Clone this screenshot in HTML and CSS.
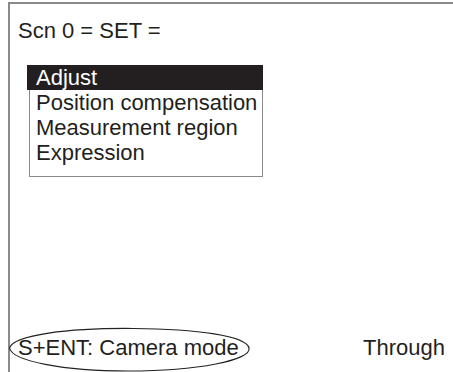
FILE: index.html
```html
<!DOCTYPE html>
<html lang="en">
<head>
  <meta charset="UTF-8">
  <title>Scn 0 = SET =</title>
  <link rel="stylesheet" href="styles.css">
</head>
<body>
<div class="screen">
  <div class="title">Scn 0 = SET =</div>

  <div class="menu">
    <div class="item active">Adjust</div>
    <div class="item">Position compensation</div>
    <div class="item">Measurement region</div>
    <div class="item">Expression</div>
  </div>

  <div class="footer">
    <span class="hint">
      S+ENT: Camera mode
      <svg class="callout" width="246" height="46" viewBox="0 0 246 46">
        <path d="M1.5 21 C6 8 60 1 125 1.5 C190 2 238 9 241 21 C244 33 190 44 120 44 C55 44 4 34 1.5 21 Z"
              fill="none" stroke="#222" stroke-width="1.2"/>
      </svg>
    </span>
    <span class="mode">Through</span>
  </div>
</div>
</body>
</html>
```

FILE: styles.css
```css
:root {
  --frame: #8a8a8a;
  --ink: #231f20;
  --font-family: 'Liberation Sans', Arial, sans-serif;
}

body {
  margin: 0;
  background: #fff;
  font-family: var(--font-family);
  color: var(--ink);
  overflow: hidden;
}

.screen {
  margin: 2px 0 0 8px;
  height: 370px;
  box-sizing: border-box;
  border-top: 2px solid var(--frame);
  border-left: 2px solid var(--frame);
  display: flex;
  flex-direction: column;
  font-size: 22px;
}

.title {
  line-height: 24px;
  padding: 15px 0 0 8px;
}

.menu {
  margin: 22px 0 0 19px;
  width: 232px;
  border: 1px solid var(--frame);
  border-top: none;
  padding-bottom: 11px;
}

.item {
  line-height: 25px;
  padding-left: 6px;
  white-space: nowrap;
}

.item.active {
  background: var(--ink);
  color: #fff;
  margin: 0 -1px 0 -3px;
  padding-left: 9px;
}

.footer {
  margin-top: auto;
  display: flex;
  line-height: 24px;
  padding: 0 0 12px 8px;
}

.hint {
  position: relative;
  width: 345px;
}

.callout {
  position: absolute;
  left: -10px;
  top: -9px;
}
```
